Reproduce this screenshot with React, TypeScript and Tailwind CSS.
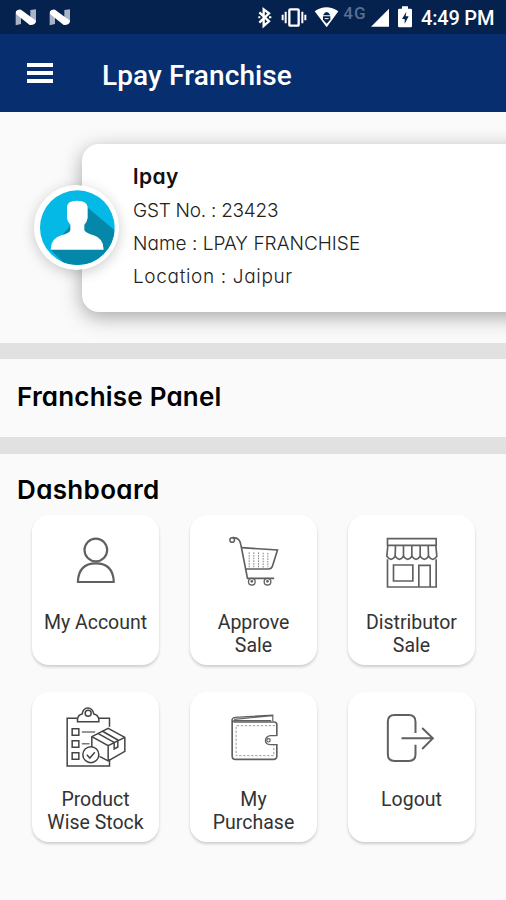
import type { ReactNode } from "react";

const details = [
  { text: "GST No. : 23423", className: "tracking-[-0.25px]" },
  { text: "Name : LPAY FRANCHISE", className: "tracking-[0.02px]" },
  { text: "Location : Jaipur", className: "tracking-[0.65px]" },
];

function NougatIcon() {
  return (
    <svg width="22" height="18" viewBox="0 0 66 54">
      <path d="M2 12l16 6v30l-16 4zM46 6l17-2v38l-17-10z" fill="#a9b3c8" />
      <path d="M3 10Q7 4 18 5L63 38Q62 52 44 51L3 18z" fill="#fff" />
    </svg>
  );
}

function StatusBar() {
  return (
    <div className="flex h-[34px] items-center justify-between bg-[#05214d] pl-[15px] pr-[11px] font-[Roboto,sans-serif]">
      <div className="flex gap-3">
        <NougatIcon />
        <NougatIcon />
      </div>
      <svg width="132" height="34" viewBox="0 0 396 102" className="ml-auto mr-[9px]" fill="none">
        {/* bluetooth */}
        <path d="M7 37l29 27-16 14V28l16 12L7 68" stroke="#fff" strokeWidth="7" />
        <path d="M4 52h6M36 52h7" stroke="#fff" strokeWidth="6" />
        {/* vibrate */}
        <rect x="97" y="28" width="28" height="49" rx="3" stroke="#fff" strokeWidth="7" />
        <path d="M86 35v35M136 35v35M77 44v17M145 44v17" stroke="#fff" strokeWidth="6" />
        {/* wifi */}
        <path d="M173 34Q208 10 244 34L209 82z" fill="#fff" />
        <path d="M198 46q11-20 22 0zM198 49h22v10l-11 12-11-12z" fill="#05214d" />
        <path d="M203 56h12" stroke="#fff" strokeWidth="3" />
        <text x="259" y="56" fontSize="51" fontWeight="500" letterSpacing="3" fill="#5a6f93">4G</text>
        {/* signal */}
        <path d="M342 80h60V20z" fill="#fff" />
      </svg>
      <svg width="14" height="22" viewBox="0 0 42 66" className="mr-[9px]">
        <path d="M12 1h18v7h8q4 0 4 4v48q0 4-4 4H4q-4 0-4-4V12q0-4 4-4h8z" fill="#fff" />
        <path d="M25 17L12 39h8v14l12-22h-9z" fill="#05214d" />
      </svg>
      <span className="w-[74px] whitespace-nowrap pt-[2px] text-[20px] font-medium leading-6 tracking-[-0.2px] text-white">
        4:49 PM
      </span>
    </div>
  );
}

function Avatar() {
  return (
    <svg width="85" height="85" viewBox="0 0 255 255" className="rounded-full shadow-[0_3px_14px_rgba(0,0,0,0.2)]">
      <circle cx="127.500" cy="127.500" r="127.500" fill="#fff" />
      <clipPath id="disc">
        <circle cx="130" cy="128" r="112" />
      </clipPath>
      <g clipPath="url(#disc)">
        <rect width="255" height="255" fill="#04b9e5" />
        <path d="M155 63l110 92v110H120L50 194z" fill="#0487a8" />
        <path
          d="M99 66q1-19 30-19t32 19v33q-2 12-10 20v17q6 9 28 15 30 9 30 43H50q0-34 32-43 24-6 27-15v-17q-9-9-10-20z"
          fill="#fff"
        />
      </g>
    </svg>
  );
}

function ProfileCard() {
  return (
    <section className="relative h-[231px] overflow-hidden pl-[82px] pt-[32px]">
      <div className="h-[168px] w-[450px] rounded-[17px] bg-white pl-[51px] pt-[17px] shadow-[0_5px_20px_rgba(0,0,0,0.34)]">
        <h2 className="text-[21px] font-semibold leading-[32px] tracking-[0.4px] text-[#111]">lpay</h2>
        {details.map((line) => (
          <p key={line.text} className={`relative top-px whitespace-nowrap text-[19px] font-light leading-[33px] text-[#222] ${line.className}`}>
            {line.text}
          </p>
        ))}
      </div>
      <div className="absolute left-[34px] top-[73px]">
        <Avatar />
      </div>
    </section>
  );
}

function Icon({ viewBox, children }: { viewBox: string; children: ReactNode }) {
  return (
    <svg width="72" height="72" viewBox={viewBox} fill="none" stroke="#606060" strokeWidth="5">
      {children}
    </svg>
  );
}

const tiles = [
  {
    label: ["My Account"],
    icon: (
      <Icon viewBox="121.5 54 216 216">
        <circle cx="229" cy="135" r="34" strokeWidth="6.500" />
        <path d="M175 231Q177 175 229 175T283 231z" strokeWidth="6.500" strokeLinejoin="round" />
      </Icon>
    ),
  },
  {
    label: ["Approve", "Sale"],
    icon: (
      <Icon viewBox="112.5 54 216 216">
        <circle cx="155" cy="105" r="7" strokeWidth="4.500" />
        <path d="M156 98q21-2 25 21l20 101h80" />
        <path d="M183 128l108 7-15 48q-3 9-12 9h-68" />
        <path d="M206 142v46M220 142v46M234 142v46M248 143v45M262 144v43" strokeWidth="3" strokeDasharray="5 3" stroke="#8a8a8a" />
        <circle cx="214" cy="230" r="10" strokeWidth="4" />
        <circle cx="261" cy="230" r="10" strokeWidth="4" />
        <circle cx="214" cy="229" r="4" fill="#606060" stroke="none" />
        <circle cx="261" cy="229" r="4" fill="#606060" stroke="none" />
      </Icon>
    ),
  },
  {
    label: ["Distributor", "Sale"],
    icon: (
      <Icon viewBox="118.5 54 216 216">
        <path d="M153 123v-22h146v22M153 163v83h146v-83" />
        <path d="M154 121h144l3 33q-12 18-25 0-12 18-25 0-12 18-25 0-12 18-25 0-12 18-25 0-12 18-25 0z" />
        <path d="M177 121l-1 33M201 121v33M226 121v33M251 121v33M275 121l1 33" />
        <path d="M171 180h58v48h-58zM247 246v-65h34v65" />
      </Icon>
    ),
  },
  {
    label: ["Product", "Wise Stock"],
    icon: (
      <Icon viewBox="121.5 60 216 216">
        <g stroke="#444" strokeWidth="4.500">
          <path d="M174 115h-31v143h127v-21M237 115h33v25" />
          <path d="M174 125v-8q2-13 14-15 3-18 17-18t18 18q12 2 15 15v8z" />
          <circle cx="206" cy="100" r="9" />
          <path d="M158 146h20v20h-20zM158 182h20v20h-20zM158 218h20v20h-20z" />
          <path d="M187 156h40M187 191h23" stroke="#777" />
          <path d="M217 202v-32l49-25 50 27v42l-50 29-26-14" />
          <path d="M217 170l49 27 50-25M266 197v46M235 160l49 27v20l11-6v-21l-47-27" />
          <circle cx="214" cy="224" r="24" fill="#fff" />
          <path d="M202 224l9 10 15-17" />
        </g>
      </Icon>
    ),
  },
  {
    label: ["My", "Purchase"],
    icon: (
      <Icon viewBox="112.5 60 216 216">
        <path d="M289 168v-34q0-7-7-8H162q-7-1-7-8v109q0 11 10 11h114q10 0 10-10v-36" />
        <path d="M155 119q0-6 10-7l112-7v18M161 118l116-11M160 122h112" strokeWidth="3.500" />
        <path d="M284 137H167v90h113v-31" strokeWidth="3" strokeDasharray="7 5" stroke="#999" />
        <path d="M289 167h-20q-13 3-14 14t14 13h20" strokeWidth="4" />
        <circle cx="264" cy="181" r="5" strokeWidth="3.500" />
      </Icon>
    ),
  },
  {
    label: ["Logout"],
    icon: (
      <Icon viewBox="118.5 60 216 216">
        <path d="M237 159v-34q0-20-20-20h-43q-20 0-20 20v98q0 20 20 20h43q20 0 20-20v-29" strokeWidth="6" />
        <path d="M195 175h92M257 144l32 31-32 32" strokeWidth="6" />
      </Icon>
    ),
  },
];

export default function App() {
  return (
    <div className="flex h-[900px] w-[506px] flex-col overflow-hidden bg-[#fafafa] font-[Inter,sans-serif] [font-feature-settings:'cv11']">
      <StatusBar />
      <header className="flex h-[78px] items-center bg-[#072f70] pl-[27px] font-[Roboto,sans-serif]">
        <div className="flex w-[26px] flex-col gap-1">
          <span className="h-[4px] bg-white" />
          <span className="h-[4px] bg-white" />
          <span className="h-[4px] bg-white" />
        </div>
        <h1 className="ml-[49px] mt-[5px] text-[28px] font-medium tracking-[0.12px] text-white">Lpay Franchise</h1>
      </header>

      <ProfileCard />

      <div className="h-[16px] bg-[#e1e1e1]" />
      <section className="flex h-[78px] items-center pl-[17px]">
        <h2 className="mt-[-3px] text-[26px] font-semibold tracking-[0.2px] text-black">Franchise Panel</h2>
      </section>
      <div className="h-[17px] bg-[#e1e1e1]" />

      <section>
        <h2 className="h-[61px] pl-[17px] pt-[18px] text-[26px] font-semibold leading-9 tracking-[0.35px] text-black">Dashboard</h2>
        <div className="grid grid-cols-[127px_127px_127px] gap-x-[31px] gap-y-[27px] pl-8">
          {tiles.map((tile) => (
            <button
              key={tile.label[0]}
              className="flex h-[150px] flex-col items-center rounded-[17px] bg-white pt-2 shadow-[0_2px_3px_rgba(0,0,0,0.18)]"
            >
              {tile.icon}
              <span className="mt-4 whitespace-nowrap font-[Roboto,sans-serif] text-[19.5px] leading-[23px] text-[#333]">
                {tile.label.map((word) => (
                  <span key={word} className="block">
                    {word}
                  </span>
                ))}
              </span>
            </button>
          ))}
        </div>
      </section>
    </div>
  );
}
